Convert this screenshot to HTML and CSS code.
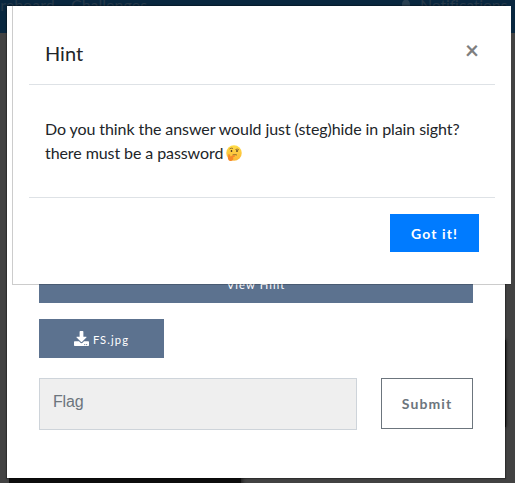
FILE: index.html
```html
<!DOCTYPE html>
<html lang="en">
<head>
<meta charset="utf-8">
<title>Challenges</title>
<link rel="stylesheet" href="styles.css">
</head>
<body>
<nav class="navbar">
  <span class="nav-link nav-scoreboard">Scoreboard</span>
  <span class="nav-link nav-challenges">Challenges</span>
  <span class="nav-link nav-notifications"><svg width="12" height="14" viewBox="0 0 12 14"><path d="M6 0C3 1 2 3 2 6c0 3-1 4-2 5h12c-1-1-2-2-2-5 0-3-1-5-4-6z"/></svg>Notifications</span>
</nav>
<div class="tile tile-side"></div>
<div class="tile tile-bottom"></div>

<section class="challenge">
  <button class="btn btn-info btn-hint">View Hint</button>
  <button class="btn btn-info btn-file">
    <svg class="download" width="15" height="15" viewBox="0 0 512 512"><path d="M216 0h80c13.300 0 24 10.700 24 24v168h87.700c17.800 0 26.700 21.500 14.100 34.100L269.700 378.300c-7.500 7.500-19.800 7.500-27.300 0L90.100 226.100c-12.600-12.600-3.700-34.100 14.100-34.100H192V24c0-13.300 10.700-24 24-24zm296 376v112c0 13.300-10.700 24-24 24H24c-13.300 0-24-10.700-24-24V376c0-13.300 10.700-24 24-24h146.700l49 49c20.100 20.100 52.500 20.100 72.600 0l49-49H488c13.300 0 24 10.700 24 24zm-124 88c0-11-9-20-20-20s-20 9-20 20 9 20 20 20 20-9 20-20zm64 0c0-11-9-20-20-20s-20 9-20 20 9 20 20 20 20-9 20-20z"/></svg>
    <span>FS.jpg</span>
  </button>
  <div class="answer">
    <input class="flag" type="text" placeholder="Flag">
    <button class="btn btn-submit">Submit</button>
  </div>
</section>

<section class="hint">
  <header class="hint-header">
    <h5>Hint</h5>
    <span class="close">×</span>
  </header>
  <div class="hint-body">
    <p>Do you think the answer would just (steg)hide in plain sight?<br>there must be a password <svg class="emoji" width="16" height="16" viewBox="0 0 32 32"><defs><linearGradient id="face" x2="0" y2="1"><stop stop-color="#ffdc48"/><stop offset="1" stop-color="#fbb735"/></linearGradient></defs><circle cx="16" cy="16" r="15.500" fill="url(#face)"/><path d="M7 8q3-3 7-1M19 9q4-2 7 1" fill="none" stroke="#8a6530" stroke-width="1.800"/><ellipse cx="11" cy="12" rx="1.700" ry="2" fill="#4e3520"/><ellipse cx="22" cy="12" rx="1.700" ry="2" fill="#4e3520"/><path d="M13 20q4-2 9 0" fill="none" stroke="#8a6530" stroke-width="1.800"/><path d="M5 18c3 0 3 3 4 5l7-3c3 0 3 3 0 4l-2 1c2 4-1 7-5 7-4 0-6-5-5-8z" fill="#f58a2a"/></svg></p>
  </div>
  <footer class="hint-footer">
    <button class="btn btn-primary">Got it!</button>
  </footer>
</section>
</body>
</html>
```
FILE: styles.css
```css
* { box-sizing: border-box; }

body {
  margin: 0;
  height: 483px;
  position: relative;
  overflow: hidden;
  background: #424242;
  font-family: Lato, "Liberation Sans", sans-serif;
  font-size: 16px;
  line-height: 24px;
  color: #212529;
}

.navbar {
  position: relative;
  height: 33px;
  background: #09273f;
}

.nav-link {
  position: absolute;
  top: -7px;
  font-size: 16px;
  line-height: 24px;
  color: #25394a;
  white-space: nowrap;
}

.nav-scoreboard { left: -25px; }
.nav-challenges { left: 71px; }
.nav-notifications { left: 400px; letter-spacing: -.2px; }
.nav-link svg { fill: #294052; margin-right: 8px; vertical-align: -2px; }

.tile { position: absolute; background: #0d0d0d; }
.tile-side { left: 400px; top: 340px; width: 106px; height: 87px; box-shadow: 0 0 3px #0d0d0d; }
.tile-bottom { left: 9px; top: 420px; width: 232px; height: 70px; box-shadow: 2px 0 3px #222; }

.challenge {
  position: absolute;
  left: 7px;
  top: 6px;
  width: 498px;
  height: 472px;
  padding: 258px 32px 0;
  background: #fff;
  box-shadow: 0 0 1px 1px rgba(0, 0, 0, .3);
}

.btn {
  display: flex;
  align-items: center;
  justify-content: center;
  margin: 0;
  padding: 0;
  border: 0;
  font-family: Lato, "Liberation Sans", sans-serif;
  font-size: 14px;
  letter-spacing: 1.1px;
}

.btn-info {
  height: 39px;
  background: #5c728f;
  color: #fff;
  font-size: 11.200px;
}

.btn-hint { width: 100%; padding-top: 2px; }
.btn-file { width: 125px; margin-top: 16px; gap: 4px; padding-top: 2px; }
.download { fill: #fff; margin-top: -2px; }

.answer {
  display: flex;
  gap: 24px;
  margin-top: 20px;
}

.flag {
  width: 318px;
  height: 52px;
  padding: 0 13px 5px;
  border: 1px solid #ced4da;
  border-radius: 0;
  background: #efefef;
  font-family: "Liberation Sans", sans-serif;
  font-size: 16px;
  letter-spacing: -.2px;
}

.flag::placeholder { color: #6c757d; opacity: 1; }

.btn-submit {
  width: 92px;
  height: 51px;
  border: 1px solid #6c757d;
  background: #fff;
  color: #6c757d;
  font-weight: 700;
}

.hint {
  position: absolute;
  left: 12px;
  top: 6px;
  width: 499px;
  height: 279px;
  padding: 16px 16px 0;
  border: solid rgba(0, 0, 0, .2);
  border-width: 0 0 1px 1px;
  background: #fff;
  background-clip: padding-box;
}

.hint-header {
  display: flex;
  justify-content: space-between;
  height: 63px;
  padding: 16px;
  border-bottom: 1px solid #dee2e6;
}

.hint-header h5 {
  margin: 0;
  font-size: 20px;
  font-weight: 400;
  line-height: 30px;
}

.close {
  font-size: 24px;
  font-weight: 700;
  line-height: 24px;
  color: #7f7f7f;
}

.hint-body { height: 112px; padding: 32px 16px; }
.hint-body p { margin: 0; letter-spacing: -.085px; }
.emoji { vertical-align: -2px; margin-left: -1px; }

.hint-footer {
  display: flex;
  justify-content: flex-end;
  padding: 16px 16px 0;
  border-top: 1px solid #dee2e6;
}

.btn-primary {
  width: 89px;
  height: 38px;
  background: #007bff;
  color: #fff;
  font-weight: 700;
}
```
